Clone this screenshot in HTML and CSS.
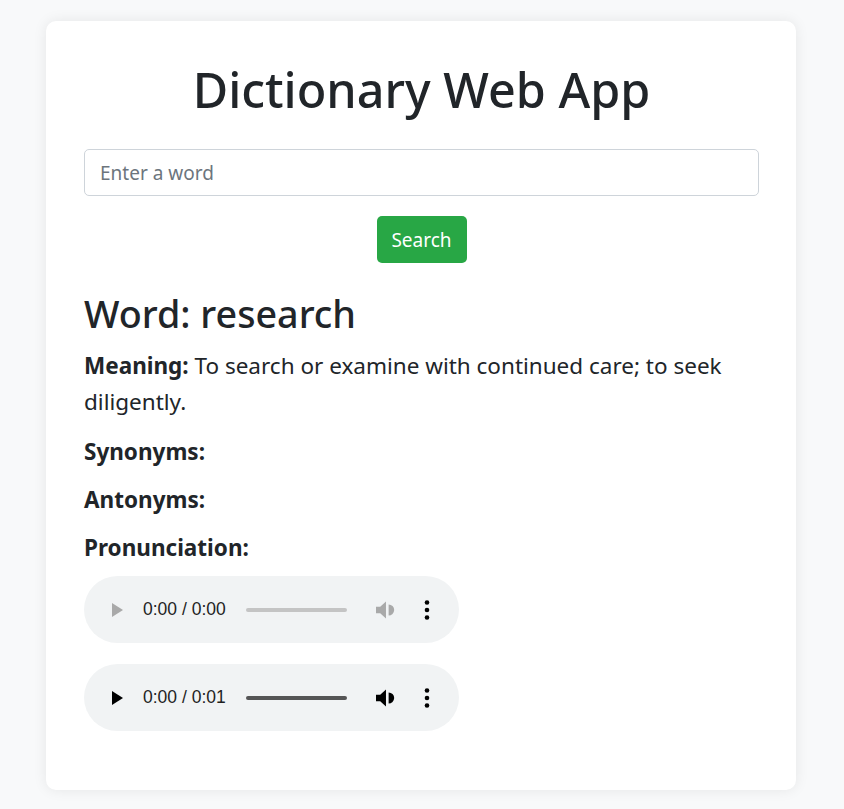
FILE: index.html
```html
<!DOCTYPE html>
<html lang="en">
<head>
<meta charset="utf-8">
<title>Dictionary Web App</title>
<link rel="stylesheet" href="styles.css">
</head>
<body>
<div class="card">
  <h1 class="title">Dictionary Web App</h1>
  <input class="word-input" type="text" placeholder="Enter a word">
  <div class="btn-row"><button class="btn-search">Search</button></div>
  <div class="result">
    <h2 class="word">Word: research</h2>
    <p class="meaning"><strong>Meaning:</strong> To search or examine with continued care; to seek diligently.</p>
    <p class="label">Synonyms:</p>
    <p class="label">Antonyms:</p>
    <p class="label last">Pronunciation:</p>
    <div class="player disabled">
      <svg class="ic play" viewBox="0 0 24 24"><path d="M8 5v14l11-7z"/></svg>
      <span class="time">0:00 / 0:00</span>
      <span class="track"></span>
      <svg class="ic vol" viewBox="0 0 20 17"><path d="M0 5.5h4l5.5-5v16l-5.5-5H0z"/><path d="M12 3.2a5.3 5.3 0 0 1 0 10.6z"/></svg>
      <svg class="ic more" viewBox="0 0 20 20"><circle cx="10" cy="2.5" r="2.3"/><circle cx="10" cy="10" r="2.3"/><circle cx="10" cy="17.5" r="2.3"/></svg>
    </div>
    <div class="player">
      <svg class="ic play" viewBox="0 0 24 24"><path d="M8 5v14l11-7z"/></svg>
      <span class="time">0:00 / 0:01</span>
      <span class="track"></span>
      <svg class="ic vol" viewBox="0 0 20 17"><path d="M0 5.5h4l5.5-5v16l-5.5-5H0z"/><path d="M12 3.2a5.3 5.3 0 0 1 0 10.6z"/></svg>
      <svg class="ic more" viewBox="0 0 20 20"><circle cx="10" cy="2.5" r="2.3"/><circle cx="10" cy="10" r="2.3"/><circle cx="10" cy="17.5" r="2.3"/></svg>
    </div>
  </div>
</div>
</body>
</html>
```

FILE: styles.css
```css
* { box-sizing: border-box; }
body {
  margin: 0;
  background: #f8f9fa;
  font-family: "Noto Sans", "Open Sans", sans-serif;
  color: #212529;
}
.card {
  width: 750px;
  margin: 21px 0 20px 46px;
  background: #fff;
  border-radius: 10px;
  box-shadow: 0 0 14px rgba(0, 0, 0, 0.08);
  padding: 39px 37px 38px 38px;
}
.title {
  margin: 0 0 31px;
  text-align: center;
  font-size: 48.5px;
  font-weight: 500;
  line-height: 1.2;
}
.word-input {
  display: block;
  width: 675px;
  height: 47px;
  border: 1px solid #ced4da;
  border-radius: 5px;
  padding: 0 15px;
  font-family: inherit;
  font-size: 19px;
  color: #495057;
}
.word-input::placeholder { color: #6c757d; }
.btn-row {
  display: flex;
  justify-content: center;
  margin-top: 20px;
}
.btn-search {
  width: 90px;
  height: 47px;
  background: #28a745;
  color: #fff;
  border: none;
  border-radius: 5px;
  font-family: inherit;
  font-size: 19px;
}
.result { margin-top: 28px; }
.word {
  margin: 0 0 12px;
  font-size: 37.7px;
  font-weight: 500;
  line-height: 1.2;
}
.meaning {
  margin: 0 0 15px;
  font-size: 22.5px;
  line-height: 36px;
}
.label {
  margin: 0 0 14px;
  font-size: 22.5px;
  line-height: 34px;
  font-weight: 700;
}
.label.last { margin-bottom: 11px; }
.player {
  width: 375px;
  height: 67px;
  border-radius: 34px;
  background: #f1f3f4;
  display: flex;
  align-items: center;
  padding: 0 0 0 24px;
  margin-bottom: 21px;
  color: #000;
}
.player.disabled { color: #a9a9a9; }
.ic { fill: currentColor; flex: none; }
.play { width: 24px; height: 24px; margin-left: -4px; }
.time {
  margin-left: 15px;
  font-family: "Liberation Sans", Arial, sans-serif;
  font-size: 17.5px;
  color: #1f1f1f;
}
.track {
  width: 101px;
  height: 4px;
  border-radius: 2px;
  background: #555;
  margin-left: 20px;
}
.disabled .track { background: #c4c4c4; }
.vol { width: 21px; height: 18px; margin-left: 29px; }
.more { width: 20px; height: 20px; margin-left: 20px; color: #000; }
```
